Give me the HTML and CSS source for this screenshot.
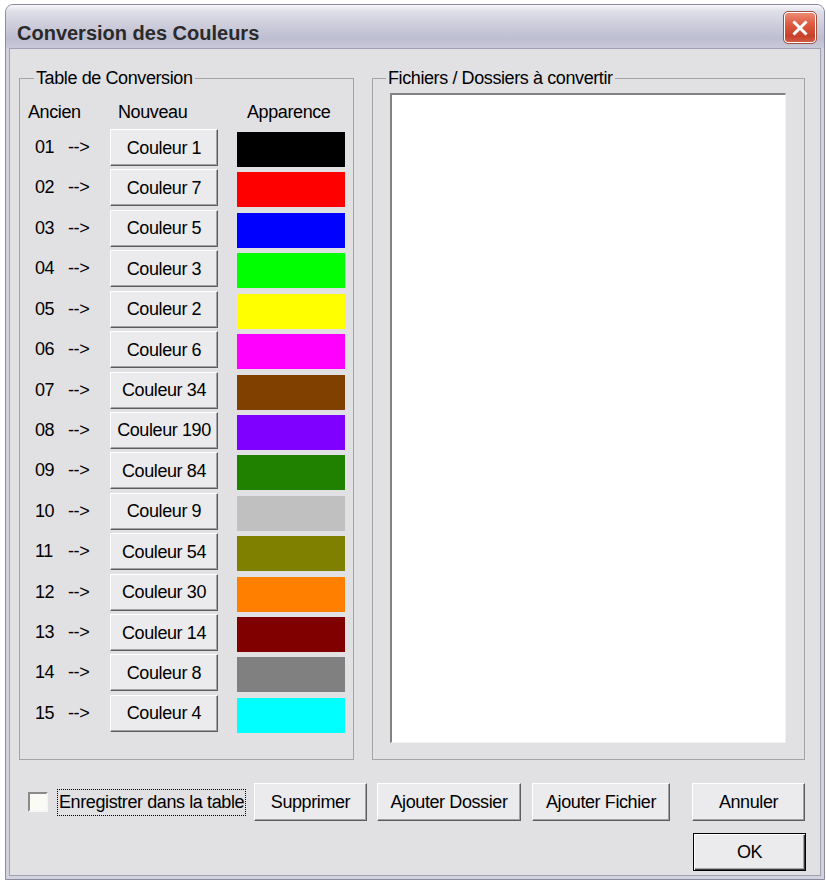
FILE: index.html
```html
<!DOCTYPE html>
<html lang="fr">
<head>
<meta charset="utf-8">
<title>Conversion des Couleurs</title>
<link rel="stylesheet" href="styles.css">
</head>
<body>
<div class="window">
  <div class="titlebar">
    <span class="title">Conversion des Couleurs</span>
    <button class="close" aria-label="Fermer">
      <svg width="20" height="20" viewBox="0 0 20 20"><path d="M4.5 4.5 L15.5 15.5 M15.5 4.5 L4.5 15.5" stroke="#fff" stroke-width="3" stroke-linecap="square" fill="none"/></svg>
    </button>
  </div>
  <div class="frame">
    <div class="client">
      <div class="groups">
        <fieldset class="group group-table">
          <legend>Table de Conversion</legend>
          <div class="table">
            <div class="th th-old">Ancien</div>
            <div class="th th-new">Nouveau</div>
            <div class="th th-look">Apparence</div>

            <div class="old"><span class="num">01</span><span>--&gt;</span></div>
            <button class="btn">Couleur 1</button>
            <div class="swatch" style="background:#000000"></div>

            <div class="old"><span class="num">02</span><span>--&gt;</span></div>
            <button class="btn">Couleur 7</button>
            <div class="swatch" style="background:#ff0000"></div>

            <div class="old"><span class="num">03</span><span>--&gt;</span></div>
            <button class="btn">Couleur 5</button>
            <div class="swatch" style="background:#0000ff"></div>

            <div class="old"><span class="num">04</span><span>--&gt;</span></div>
            <button class="btn">Couleur 3</button>
            <div class="swatch" style="background:#00ff00"></div>

            <div class="old"><span class="num">05</span><span>--&gt;</span></div>
            <button class="btn">Couleur 2</button>
            <div class="swatch" style="background:#ffff00"></div>

            <div class="old"><span class="num">06</span><span>--&gt;</span></div>
            <button class="btn">Couleur 6</button>
            <div class="swatch" style="background:#ff00ff"></div>

            <div class="old"><span class="num">07</span><span>--&gt;</span></div>
            <button class="btn">Couleur 34</button>
            <div class="swatch" style="background:#804000"></div>

            <div class="old"><span class="num">08</span><span>--&gt;</span></div>
            <button class="btn">Couleur 190</button>
            <div class="swatch" style="background:#8000ff"></div>

            <div class="old"><span class="num">09</span><span>--&gt;</span></div>
            <button class="btn">Couleur 84</button>
            <div class="swatch" style="background:#208000"></div>

            <div class="old"><span class="num">10</span><span>--&gt;</span></div>
            <button class="btn">Couleur 9</button>
            <div class="swatch" style="background:#c0c0c0"></div>

            <div class="old"><span class="num">11</span><span>--&gt;</span></div>
            <button class="btn">Couleur 54</button>
            <div class="swatch" style="background:#808000"></div>

            <div class="old"><span class="num">12</span><span>--&gt;</span></div>
            <button class="btn">Couleur 30</button>
            <div class="swatch" style="background:#ff8000"></div>

            <div class="old"><span class="num">13</span><span>--&gt;</span></div>
            <button class="btn">Couleur 14</button>
            <div class="swatch" style="background:#800000"></div>

            <div class="old"><span class="num">14</span><span>--&gt;</span></div>
            <button class="btn">Couleur 8</button>
            <div class="swatch" style="background:#808080"></div>

            <div class="old"><span class="num">15</span><span>--&gt;</span></div>
            <button class="btn">Couleur 4</button>
            <div class="swatch" style="background:#00ffff"></div>
          </div>
        </fieldset>
        <fieldset class="group group-files">
          <legend>Fichiers / Dossiers à convertir</legend>
          <div class="listbox"></div>
        </fieldset>
      </div>
      <div class="actions">
        <div class="row">
          <label class="check"><span class="box"></span><span class="check-label">Enregistrer dans la table</span></label>
          <button class="btn btn-wide btn-supp">Supprimer</button>
          <button class="btn btn-wide btn-dossier">Ajouter Dossier</button>
          <button class="btn btn-wide btn-fichier">Ajouter Fichier</button>
          <button class="btn btn-wide btn-annuler">Annuler</button>
        </div>
        <div class="row row-ok">
          <button class="btn btn-wide btn-ok">OK</button>
        </div>
      </div>
    </div>
  </div>
</div>
</body>
</html>
```

FILE: styles.css
```css
* { box-sizing: border-box; }

html, body {
  margin: 0;
  background: #ffffff;
}

body {
  font-family: "Liberation Sans", Arial, sans-serif;
  font-size: 18px;
  letter-spacing: -0.4px;
  color: #000;
}

.window {
  margin: 4px 0 0 5px;
  width: 820px;
  height: 876px;
  display: flex;
  flex-direction: column;
  border: 1px solid #8a8aa2;
  border-radius: 8px 8px 0 0;
  background: #d2d2df;
}

.titlebar {
  height: 43px;
  flex: none;
  display: flex;
  align-items: flex-start;
  justify-content: space-between;
  padding: 0 8px 0 11px;
  border-radius: 7px 7px 0 0;
  background: linear-gradient(to bottom, #f8f8fb 0%, #e0e0ea 14%, #cdcddb 45%, #bebed1 78%, #c8c8d8 100%);
}

.title {
  margin-top: 16px;
  font-size: 20px;
  line-height: 24px;
  letter-spacing: 0;
  font-weight: bold;
  color: #2a2a2a;
}

.close {
  margin-top: 7px;
  width: 32px;
  height: 31px;
  padding: 0;
  display: flex;
  align-items: center;
  justify-content: center;
  border: 1px solid #ffffff;
  border-radius: 4px;
  outline: 1px solid #a05040;
  background: linear-gradient(to bottom, #ec8a72 0%, #dc5a40 40%, #c8402a 80%, #d05a44 100%);
}

.frame {
  flex: 1;
  display: flex;
  padding: 0 3px 3px;
}

.client {
  flex: 1;
  display: flex;
  flex-direction: column;
  padding: 19px 14px 0 9px;
  border: 1px solid #a0a0b4;
  background: #e1e1e4;
}

.groups {
  display: flex;
  gap: 18px;
  height: 692px;
}

.group {
  margin: 0;
  padding: 0;
  min-width: 0;
  border: 1px solid #a4a4a8;
}

.group legend {
  margin-left: 14px;
  padding: 0 2px;
  line-height: 20px;
}

.group-table {
  width: 335px;
  flex: none;
}

.group-files {
  width: 433px;
  flex: none;
  display: flex;
  flex-direction: column;
  padding: 5px 18px 16px 17px;
}

.group-files legend {
  margin-left: -4px;
}

.table {
  display: grid;
  grid-template-columns: 75px 127px 108px;
  grid-template-rows: 27px repeat(15, 40.43px);
  padding: 14px 0 0 15px;
}

.th {
  line-height: 20px;
  align-self: start;
}

.th-old { margin-left: -7px; }
.th-new { padding-left: 8px; }
.th-look { padding-left: 10px; }

.old {
  height: 37px;
  display: flex;
  align-items: center;
}

.num {
  width: 33px;
}

.btn {
  font-family: inherit;
  font-size: 18px;
  letter-spacing: -0.4px;
  line-height: 1;
  white-space: nowrap;
  color: #000;
  padding: 0;
  width: 108px;
  height: 37px;
  background: #ebebed;
  border: 1px solid;
  border-color: #ffffff #5c5c5c #5c5c5c #ffffff;
  box-shadow: inset -1px -1px 0 #a2a2a6;
  align-self: start;
}

.swatch {
  margin-top: 3px;
  height: 35px;
  width: 108px;
}

.listbox {
  flex: 1;
  background: #ffffff;
  border-style: solid;
  border-width: 2px 1px 1px 2px;
  border-color: #828282 #f2f2f2 #f2f2f2 #828282;
}

.actions {
  margin-top: 23px;
  display: flex;
  flex-direction: column;
  gap: 12px;
}

.row {
  display: flex;
  align-items: center;
}

.row-ok {
  justify-content: flex-end;
}

.check {
  display: flex;
  align-items: center;
  margin-left: 9px;
}

.box {
  width: 20px;
  height: 20px;
  border-style: solid;
  border-width: 2px;
  border-color: #8a8a8a #f6f6f6 #f6f6f6 #8a8a8a;
  background: #fbfbf5;
}

.check-label {
  margin-left: 9px;
  width: 189px;
  height: 27px;
  line-height: 25px;
  padding-left: 1px;
  white-space: nowrap;
  overflow: hidden;
  border: 1px dotted #000;
}

.btn-wide { height: 38px; }
.btn-supp { margin-left: 8px; width: 113px; }
.btn-dossier { margin-left: 10px; width: 144px; }
.btn-fichier { margin-left: 11px; width: 138px; }
.btn-annuler { margin-left: 22px; width: 113px; }

.btn-ok {
  width: 113px;
  border: 1px solid #000;
  box-shadow: inset 1px 1px 0 #ffffff, inset -1px -1px 0 #3c3c3c, inset -2px -2px 0 #a2a2a6;
}
```
